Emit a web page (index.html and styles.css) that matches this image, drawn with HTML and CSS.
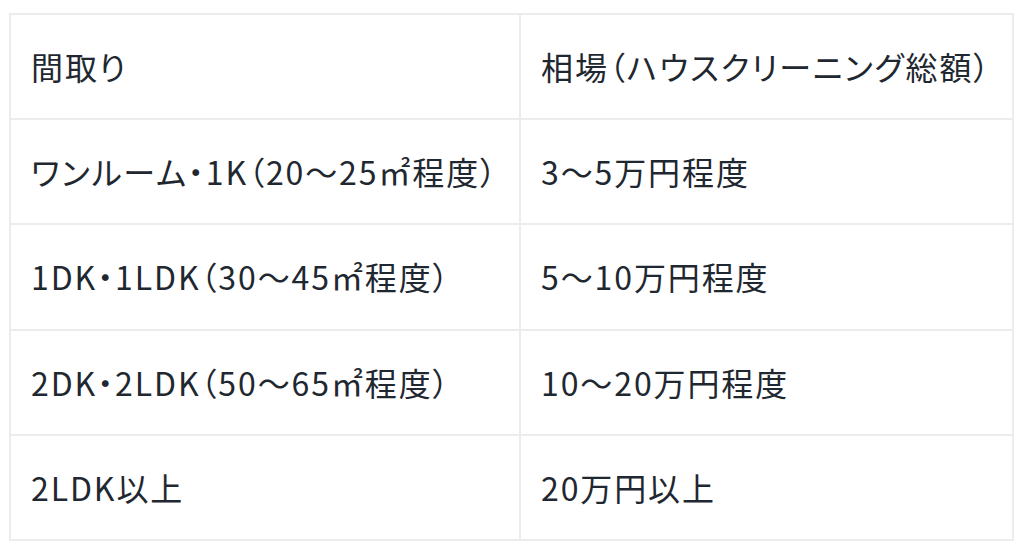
FILE: index.html
```html
<!DOCTYPE html>
<html lang="ja">
<head>
<meta charset="utf-8">
<title>間取り別相場</title>
<link rel="stylesheet" href="styles.css">
</head>
<body>
<table class="price-table">
  <colgroup>
    <col class="col-plan">
    <col class="col-price">
  </colgroup>
  <tbody>
    <tr><td>間取り</td><td>相場（ハウスクリーニング総額）</td></tr>
    <tr><td>ワンルーム・1K（20〜25㎡程度）</td><td>3〜5万円程度</td></tr>
    <tr><td>1DK・1LDK（30〜45㎡程度）</td><td>5〜10万円程度</td></tr>
    <tr><td>2DK・2LDK（50〜65㎡程度）</td><td>10〜20万円程度</td></tr>
    <tr><td>2LDK以上</td><td>20万円以上</td></tr>
  </tbody>
</table>
</body>
</html>
```
FILE: styles.css
```css
html, body {
  background: #ffffff;
}
body {
  margin: 0;
  padding: 13px 0 0 9px;
  font-family: "Noto Sans CJK JP", "Noto Sans", sans-serif;
  color: #1f2830;
}
.price-table {
  width: 1005px;
  table-layout: fixed;
  border-collapse: separate;
  border-spacing: 0;
  border-top: 2px solid #ececec;
  border-left: 2px solid #ececec;
}
.col-plan {
  width: 510px;
}
.price-table td {
  box-sizing: border-box;
  padding: 29.1px 20px;
  font-size: 32px;
  line-height: 45px;
  letter-spacing: 1.9px;
  font-feature-settings: "palt";
  border-right: 2px solid #ececec;
  border-bottom: 2px solid #ececec;
  white-space: nowrap;
  vertical-align: middle;
}
```
